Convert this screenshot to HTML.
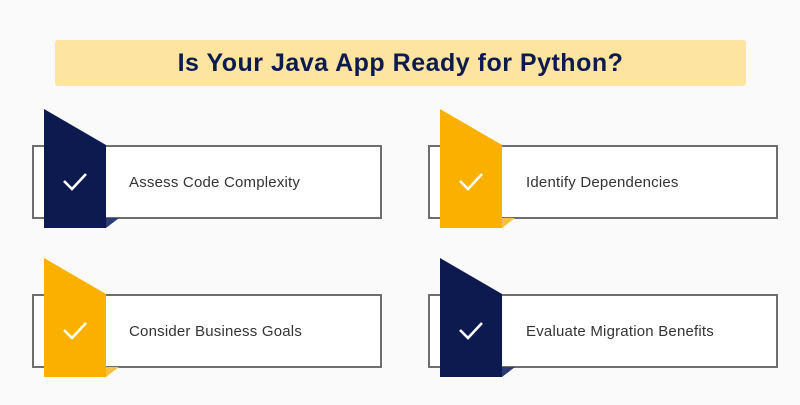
<!DOCTYPE html><html><head><style>
body{margin:0;width:800px;height:405px;background:#fafafa;position:relative;overflow:hidden;font-family:"Liberation Sans",sans-serif}
.ban{position:absolute;left:55px;top:40px;width:691px;height:46px;background:#fde4a0;border-radius:3px;text-align:center;line-height:46px;font-size:25px;font-weight:bold;color:#0c1a4f;letter-spacing:0.5px}
.box{position:absolute;width:346px;height:70px;border:2px solid #6e6e6e;background:#fff}
.t{position:absolute;font-size:15px;color:#333;line-height:20px;letter-spacing:0.2px}
svg{position:absolute}
</style></head><body>
<div class="ban">Is Your Java App Ready for Python?</div>

<div class="box" style="left:32px;top:145px"></div>
<div class="box" style="left:428px;top:145px"></div>
<div class="box" style="left:32px;top:294px"></div>
<div class="box" style="left:428px;top:294px"></div>

<svg style="left:44px;top:109px" width="76" height="120"><polygon points="0,0 62,36 62,119 0,119" fill="#0c1a4f"/><polygon points="62,109 75,109 62,119" fill="#2c3a75"/><path d="M20 72l8 8 14-15" stroke="#fff" stroke-width="2.6" fill="none"/></svg>
<svg style="left:440px;top:109px" width="76" height="120"><polygon points="0,0 62,36 62,119 0,119" fill="#fbb000"/><polygon points="62,109 75,109 62,119" fill="#f7c040"/><path d="M20 72l8 8 14-15" stroke="#fff" stroke-width="2.6" fill="none"/></svg>
<svg style="left:44px;top:258px" width="76" height="120"><polygon points="0,0 62,36 62,119 0,119" fill="#fbb000"/><polygon points="62,109 75,109 62,119" fill="#f7c040"/><path d="M20 72l8 8 14-15" stroke="#fff" stroke-width="2.6" fill="none"/></svg>
<svg style="left:440px;top:258px" width="76" height="120"><polygon points="0,0 62,36 62,119 0,119" fill="#0c1a4f"/><polygon points="62,109 75,109 62,119" fill="#2c3a75"/><path d="M20 72l8 8 14-15" stroke="#fff" stroke-width="2.6" fill="none"/></svg>

<div class="t" style="left:129px;top:173px">Assess Code Complexity</div>
<div class="t" style="left:526px;top:173px">Identify Dependencies</div>
<div class="t" style="left:129px;top:322px">Consider Business Goals</div>
<div class="t" style="left:526px;top:322px">Evaluate Migration Benefits</div>
</body></html>
